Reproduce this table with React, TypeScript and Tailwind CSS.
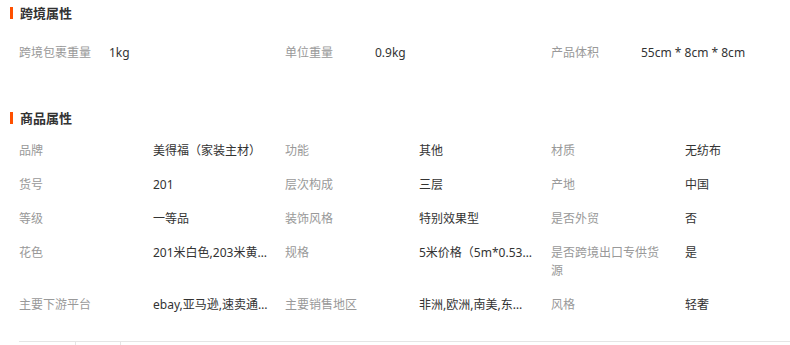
const crossBorder = [
  { label: "跨境包裹重量", value: "1kg" },
  { label: "单位重量", value: "0.9kg" },
  { label: "产品体积", value: "55cm * 8cm * 8cm" },
];

const attrs = [
  { label: "品牌", value: "美得福（家装主材）" },
  { label: "功能", value: "其他" },
  { label: "材质", value: "无纺布" },
  { label: "货号", value: "201" },
  { label: "层次构成", value: "三层" },
  { label: "产地", value: "中国" },
  { label: "等级", value: "一等品" },
  { label: "装饰风格", value: "特别效果型" },
  { label: "是否外贸", value: "否" },
  { label: "花色", value: "201米白色,203米黄色,205浅咖色" },
  { label: "规格", value: "5米价格（5m*0.53m）" },
  { label: "是否跨境出口专供货源", value: "是" },
  { label: "主要下游平台", value: "ebay,亚马逊,速卖通,wish" },
  { label: "主要销售地区", value: "非洲,欧洲,南美,东南亚" },
  { label: "风格", value: "轻奢" },
];

function Title({ children }: { children: string }) {
  return (
    <div className="flex items-center gap-[7px] pl-[10px]">
      <span className="h-[12px] w-[3px] bg-[#ff5000]" />
      <h3 className="text-[13px] font-bold leading-[18px] text-[#333]">{children}</h3>
    </div>
  );
}

export default function App() {
  return (
    <div
      className="w-[790px] h-[345px] overflow-hidden bg-white text-[12px] leading-[18px]"
      style={{ fontFamily: '"Noto Sans", "Noto Sans CJK SC", sans-serif' }}
    >
      <div className="pt-[4px]">
        <Title>跨境属性</Title>
      </div>
      <div className="mt-[14px] grid grid-cols-[90px_176px_90px_176px_90px_1fr] pl-[19px]">
        {crossBorder.map((a) => (
          <div key={a.label} className="contents">
            <div className="py-[8px] text-[#999]">{a.label}</div>
            <div className="py-[8px] text-[#333] truncate pr-[16px]">{a.value}</div>
          </div>
        ))}
      </div>
      <div className="mt-[39px]">
        <Title>商品属性</Title>
      </div>
      <div className="mt-[7px] grid grid-cols-[134px_132px_134px_132px_134px_1fr] pl-[19px]">
        {attrs.map((a) => (
          <div key={a.label} className="contents">
            <div className="py-[8px] pr-[20px] text-[#999]">{a.label}</div>
            <div className="py-[8px] pr-[17px] text-[#333] truncate">{a.value}</div>
          </div>
        ))}
      </div>
      <div className="relative mt-[19px] ml-[19px] border-t border-[#e5e5e5]">
        <span className="absolute left-[56px] top-0 h-[3px] w-px bg-[#e5e5e5]" />
        <span className="absolute left-[101px] top-0 h-[3px] w-px bg-[#e5e5e5]" />
      </div>
    </div>
  );
}
